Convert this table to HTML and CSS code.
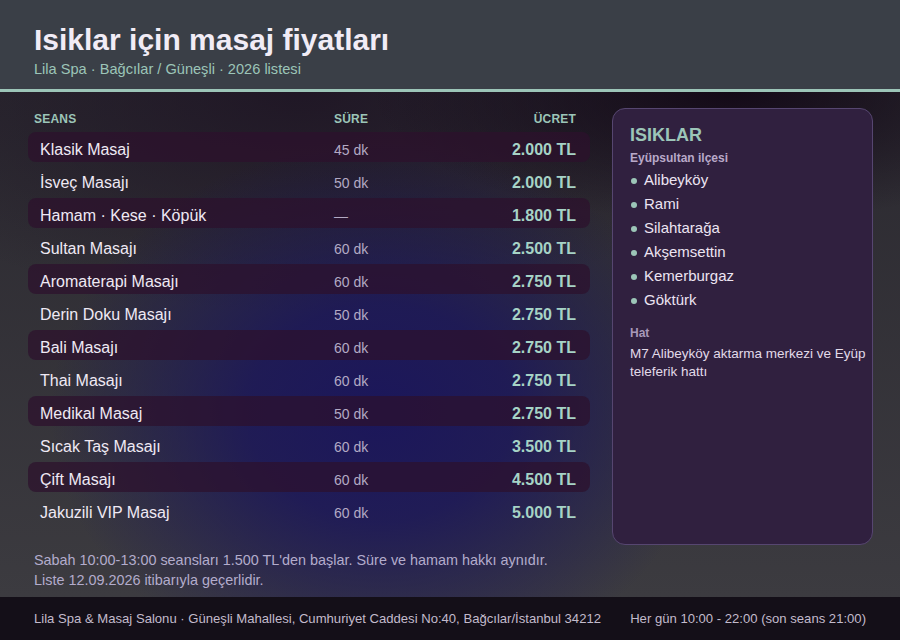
FILE: index.html
```html
<!DOCTYPE html>
<html lang="tr">
<head>
<meta charset="utf-8">
<title>Isiklar için masaj fiyatları</title>
<link rel="stylesheet" href="styles.css">
</head>
<body>
<div class="page">
  <header class="top">
    <h1 class="title">Isiklar için masaj fiyatları</h1>
    <p class="subtitle">Lila Spa · Bağcılar / Güneşli · 2026 listesi</p>
  </header>
  <main class="main">
    <section class="prices">
      <div class="thead">
        <span>Seans</span><span>Süre</span><span class="r">Ücret</span>
      </div>
      <div class="row alt"><span class="name">Klasik Masaj</span><span class="dur">45 dk</span><span class="price">2.000 TL</span></div>
      <div class="row"><span class="name">İsveç Masajı</span><span class="dur">50 dk</span><span class="price">2.000 TL</span></div>
      <div class="row alt"><span class="name">Hamam · Kese · Köpük</span><span class="dur">—</span><span class="price">1.800 TL</span></div>
      <div class="row"><span class="name">Sultan Masajı</span><span class="dur">60 dk</span><span class="price">2.500 TL</span></div>
      <div class="row alt"><span class="name">Aromaterapi Masajı</span><span class="dur">60 dk</span><span class="price">2.750 TL</span></div>
      <div class="row"><span class="name">Derin Doku Masajı</span><span class="dur">50 dk</span><span class="price">2.750 TL</span></div>
      <div class="row alt"><span class="name">Bali Masajı</span><span class="dur">60 dk</span><span class="price">2.750 TL</span></div>
      <div class="row"><span class="name">Thai Masajı</span><span class="dur">60 dk</span><span class="price">2.750 TL</span></div>
      <div class="row alt"><span class="name">Medikal Masaj</span><span class="dur">50 dk</span><span class="price">2.750 TL</span></div>
      <div class="row"><span class="name">Sıcak Taş Masajı</span><span class="dur">60 dk</span><span class="price">3.500 TL</span></div>
      <div class="row alt"><span class="name">Çift Masajı</span><span class="dur">60 dk</span><span class="price">4.500 TL</span></div>
      <div class="row"><span class="name">Jakuzili VIP Masaj</span><span class="dur">60 dk</span><span class="price">5.000 TL</span></div>
      <div class="notes">
        <p>Sabah 10:00-13:00 seansları 1.500 TL'den başlar. Süre ve hamam hakkı aynıdır.</p>
        <p>Liste 12.09.2026 itibarıyla geçerlidir.</p>
      </div>
    </section>
    <aside class="side">
      <h2 class="side-title">ISIKLAR</h2>
      <p class="side-sub">Eyüpsultan ilçesi</p>
      <ul class="hoods">
        <li>Alibeyköy</li>
        <li>Rami</li>
        <li>Silahtarağa</li>
        <li>Akşemsettin</li>
        <li>Kemerburgaz</li>
        <li>Göktürk</li>
      </ul>
      <p class="side-label">Hat</p>
      <p class="side-text">M7 Alibeyköy aktarma merkezi ve Eyüp teleferik hattı</p>
    </aside>
  </main>
  <footer class="foot">
    <span>Lila Spa &amp; Masaj Salonu · Güneşli Mahallesi, Cumhuriyet Caddesi No:40, Bağcılar/İstanbul 34212</span>
    <span>Her gün 10:00 - 22:00 (son seans 21:00)</span>
  </footer>
</div>
</body>
</html>
```

FILE: styles.css
```css
* { box-sizing: border-box; }
html, body { margin: 0; padding: 0; }
body {
  width: 900px;
  height: 640px;
  overflow: hidden;
  font-family: "Liberation Sans", Arial, sans-serif;
  color: #ece6f2;
  background: #38373c;
}
.page {
  width: 900px;
  height: 640px;
  display: flex;
  flex-direction: column;
}
.top {
  height: 92px;
  flex: none;
  padding: 22px 34px 0;
  background: #3a3f47;
  border-bottom: 3px solid #9cc5b8;
}
.title {
  margin: 0;
  font-size: 30px;
  line-height: 36px;
  font-weight: 700;
  color: #f1ecf6;
}
.subtitle {
  margin: 2px 0 0;
  font-size: 14.6px;
  line-height: 18px;
  color: #9cc5b8;
}
.main {
  flex: 1;
  display: flex;
  gap: 22px;
  padding: 16px 27px 0 28px;
  background:
    radial-gradient(ellipse 330px 270px at 380px 320px, rgba(26, 21, 92, 0.95) 0%, rgba(26, 21, 92, 0.8) 40%, rgba(26, 21, 92, 0) 100%),
    radial-gradient(ellipse 360px 130px at 730px 0px, rgba(20, 10, 24, 1), rgba(20, 10, 24, 0) 100%),
    radial-gradient(ellipse 480px 220px at 300px 0px, rgba(30, 20, 36, 0.85), rgba(30, 20, 36, 0) 100%),
    linear-gradient(180deg, #2b2930 0%, #3c3b40 100%);
}
.prices {
  width: 562px;
  flex: none;
}
.thead {
  display: grid;
  grid-template-columns: 300px 1fr auto;
  height: 20px;
  line-height: 21px;
  padding: 1px 14px 0 6px;
  margin-bottom: 4px;
  font-size: 12px;
  font-weight: 700;
  text-transform: uppercase;
  letter-spacing: 0.2px;
  color: #9cc5b8;
}
.thead .r { text-align: right; }
.row {
  display: grid;
  grid-template-columns: 294px 1fr auto;
  align-items: center;
  height: 30px;
  margin-bottom: 3px;
  padding: 5px 14px 0 12px;
  border-radius: 8px;
}
.row.alt { background: rgba(44, 16, 44, 0.72); }
.name { font-size: 16px; color: #efe9f4; }
.dur { font-size: 14px; color: #b3aac4; }
.price {
  font-size: 16px;
  font-weight: 700;
  color: #a6d3c6;
  text-align: right;
}
.notes {
  margin-top: 25px;
  padding-left: 6px;
  font-size: 14.4px;
  line-height: 20px;
  color: #b3accc;
}
.notes p { margin: 0; }
.side {
  width: 261px;
  height: 437px;
  flex: none;
  padding: 14px 6px 0 17px;
  background: #30203f;
  border: 1px solid #564670;
  border-radius: 13px;
}
.side-title {
  margin: 0;
  font-size: 18px;
  line-height: 24px;
  font-weight: 700;
  color: #9cc5b8;
}
.side-sub {
  margin: 3px 0 0;
  font-size: 12px;
  line-height: 16px;
  font-weight: 700;
  color: #b9a9c9;
}
.hoods {
  list-style: none;
  margin: 2px 0 0;
  padding: 0;
}
.hoods li {
  display: flex;
  align-items: center;
  gap: 7px;
  font-size: 15px;
  line-height: 24px;
  color: #ece4f2;
}
.hoods li::before {
  content: "";
  width: 6px;
  height: 6px;
  margin-left: 1px;
  margin-top: 2px;
  border-radius: 50%;
  background: #9cc5b8;
  flex: none;
}
.side-label {
  margin: 13px 0 0;
  font-size: 12px;
  line-height: 16px;
  font-weight: 700;
  color: #a899b9;
}
.side-text {
  margin: 4px 0 0;
  font-size: 13.5px;
  line-height: 18px;
  color: #e2dae9;
}
.foot {
  height: 43px;
  flex: none;
  display: flex;
  align-items: center;
  justify-content: space-between;
  padding: 0 34px;
  background: #140f18;
  font-size: 13.1px;
  color: #c3bbcc;
}
```
